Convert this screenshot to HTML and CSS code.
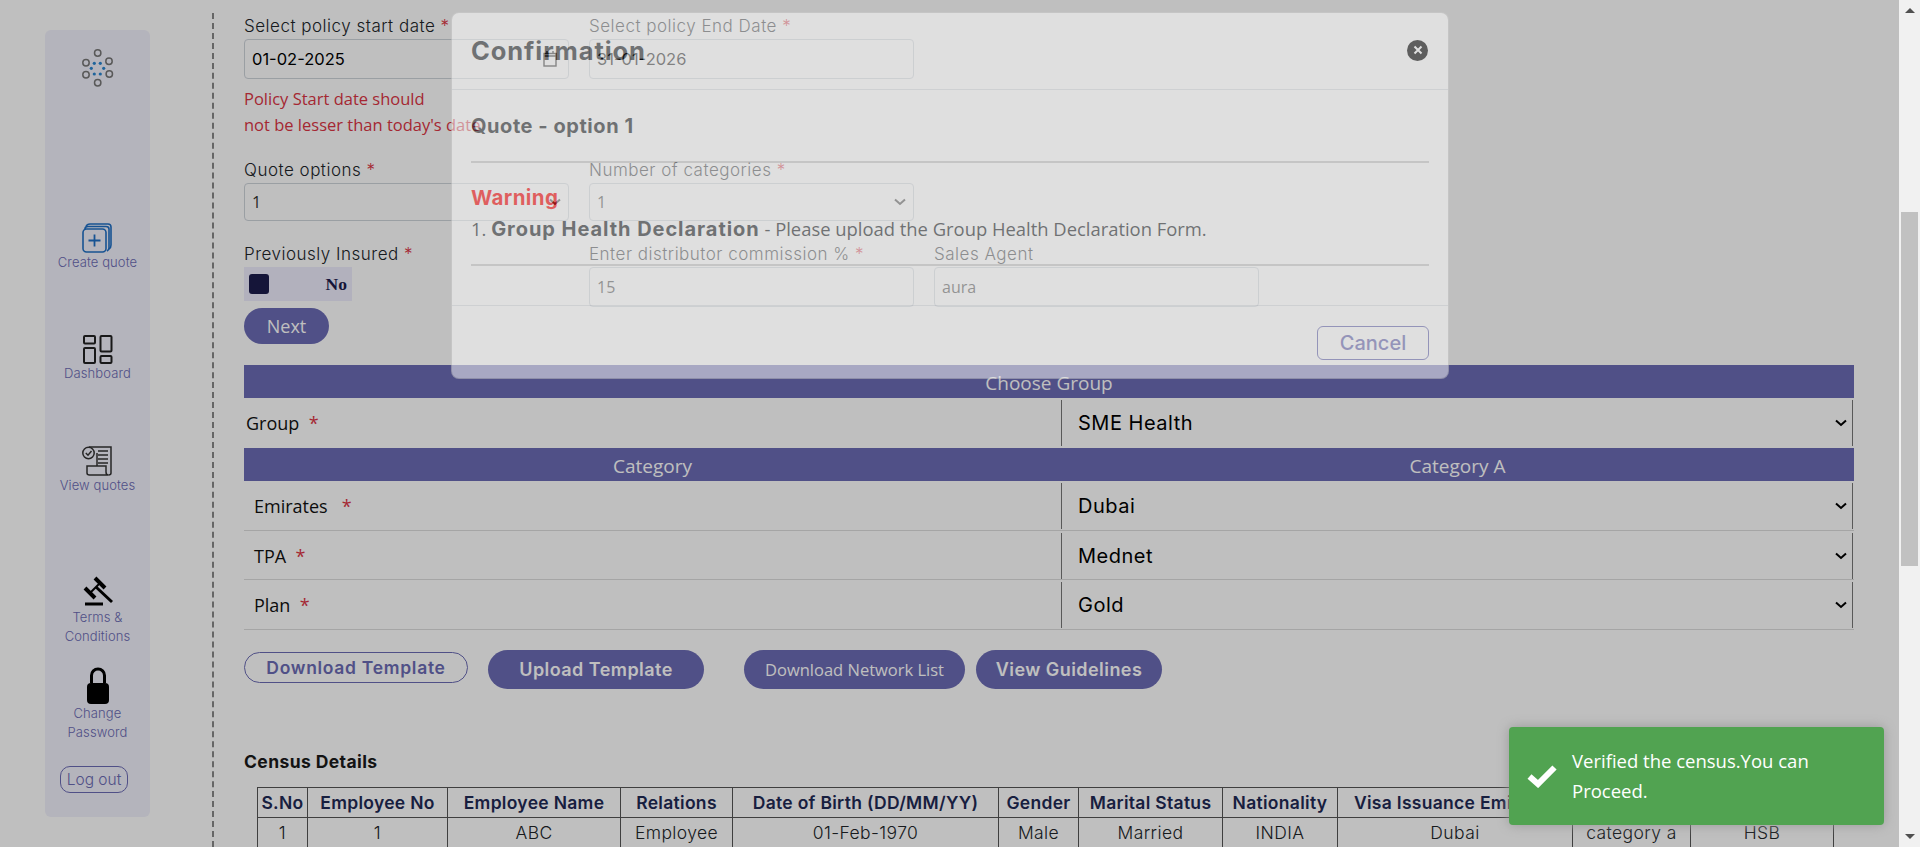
FILE: index.html
```html
<!DOCTYPE html>
<html lang="en">
<head>
  <meta charset="UTF-8">
  <title>Create Quote</title>
  <link rel="stylesheet" href="styles.css">
</head>
<body>
  <div class="viewport">
    <aside class="sidebar">
      <svg class="logo" width="32" height="38" viewBox="0 0 32 38">
        <g fill="none" stroke="#777" stroke-width="1.5">
          <circle cx="15.7" cy="4" r="3.2"/><circle cx="4" cy="13.7" r="3.2"/><circle cx="27" cy="12.3" r="3.2"/>
          <circle cx="4" cy="25.7" r="3.2"/><circle cx="27.3" cy="25" r="3.2"/><circle cx="15.7" cy="33.7" r="3.2"/>
        </g>
        <g fill="#2a86d0">
          <circle cx="12.3" cy="14.3" r="1.6"/><circle cx="18.3" cy="14.3" r="1.6"/><circle cx="9.3" cy="19.3" r="1.6"/>
          <circle cx="21.7" cy="19.3" r="1.6"/><circle cx="12.3" cy="25" r="1.6"/><circle cx="18.3" cy="25" r="1.6"/>
        </g>
      </svg>

      <a class="nav-item nav-create">
        <svg width="30" height="30" viewBox="0 0 30 30" fill="none" stroke="#1f6fc4" stroke-width="1.6">
          <path d="M4 3.5 Q5 1 8 1 H26 Q29 1 29 4 V22 Q29 25 27 26"/>
          <path d="M3 6 Q3 3.5 6 3.5 H24 Q27 3.5 27 6 V25 Q27 27 25 28"/>
          <rect x="1" y="6" width="23" height="23" rx="3.5"/>
          <path d="M12.5 11.5 V23.5 M6.5 17.5 H18.5" stroke-width="1.8"/>
        </svg>
        <span>Create quote</span>
      </a>

      <a class="nav-item nav-dash">
        <svg width="30" height="29" viewBox="0 0 30 29" fill="none" stroke="#222" stroke-width="2">
          <rect x="1" y="1" width="11" height="7.5" rx="1"/>
          <rect x="17.5" y="1" width="11" height="15.5" rx="1"/>
          <rect x="1" y="13" width="11" height="15" rx="1"/>
          <rect x="17.5" y="21" width="11" height="7" rx="1"/>
        </svg>
        <span>Dashboard</span>
      </a>

      <a class="nav-item nav-view">
        <svg width="30" height="30" viewBox="0 0 30 30" fill="none" stroke="#333" stroke-width="1.5">
          <path d="M7 1 H29 V27 Q29 29 26.5 29"/>
          <path d="M5 20 V27 Q5 29 7.5 29 H26.5 Q24 29 24 26 V20 H5 Z"/>
          <path d="M15 20 V7"/>
          <circle cx="6.5" cy="7" r="5.7" fill="#f1f0fb"/>
          <path d="M3.8 7 L6 9.2 L9.5 5"/>
          <path d="M16 5 H26 M16 9 H26 M16 13 H26 M16 17 H26" stroke-width="1.3"/>
        </svg>
        <span>View quotes</span>
      </a>

      <a class="nav-item nav-terms">
        <svg width="32" height="32" viewBox="0 0 32 32" fill="none" stroke="#000">
          <path d="M4 14 L14 24 M14 4 L24 14" stroke-width="4"/>
          <path d="M10 18 L18 10" stroke-width="2"/>
          <path d="M15 13 L31 28" stroke-width="3"/>
          <path d="M4 30 H22" stroke-width="3"/>
        </svg>
        <span>Terms &amp;<br>Conditions</span>
      </a>

      <a class="nav-item nav-lock">
        <svg width="24" height="37" viewBox="0 0 24 37">
          <path d="M5.500 16 V8.500 a6.500 6.500 0 0 1 13 0 V16" fill="none" stroke="#000" stroke-width="3"/>
          <rect x="1" y="16" width="22" height="21" rx="4" fill="#000"/>
        </svg>
        <span>Change<br>Password</span>
      </a>

      <button class="logout">Log out</button>
    </aside>

    <main class="content">
      <div class="form-grid">
        <div class="field">
          <label>Select policy start date <i>*</i></label>
          <div class="date-box">
            <input type="text" value="01-02-2025">
            <svg width="14" height="16" viewBox="0 0 14 16" fill="none" stroke="#111" stroke-width="1.4">
              <rect x="1" y="2.500" width="12" height="12.500"/>
              <path d="M4 0 V3 M10 0 V3 M1 5 H13"/>
            </svg>
          </div>
          <p class="error">Policy Start date should<br>not be lesser than today's date</p>
        </div>
        <div class="field">
          <label>Select policy End Date <i>*</i></label>
          <div class="date-box"><input type="text" value="31-01-2026"></div>
        </div>
        <div></div>

        <div class="field">
          <label>Quote options <i>*</i></label>
          <select class="form-select"><option>1</option></select>
        </div>
        <div class="field">
          <label>Number of categories <i>*</i></label>
          <select class="form-select"><option>1</option></select>
        </div>
        <div></div>

        <div class="field">
          <label>Previously Insured <i>*</i></label>
          <div class="toggle"><span class="knob"></span><b>No</b></div>
          <button class="btn next">Next</button>
        </div>
        <div class="field">
          <label>Enter distributor commission % <i>*</i></label>
          <input class="form-input" type="text" value="15">
        </div>
        <div class="field">
          <label>Sales Agent</label>
          <input class="form-input" type="text" value="aura">
        </div>
      </div>

      <section class="plan-table">
        <div class="bar bar-full">Choose Group</div>
        <div class="plan-row row-group">
          <div class="plan-label group-label">Group &nbsp;<i>*</i></div>
          <select class="plan-select"><option>SME Health</option></select>
        </div>
        <div class="bar bar-split"><span>Category</span><span>Category A</span></div>
        <div class="plan-row">
          <div class="plan-label">Emirates &nbsp;&nbsp;<i>*</i></div>
          <select class="plan-select"><option>Dubai</option></select>
        </div>
        <div class="plan-row">
          <div class="plan-label">TPA &nbsp;<i>*</i></div>
          <select class="plan-select"><option>Mednet</option></select>
        </div>
        <div class="plan-row">
          <div class="plan-label">Plan &nbsp;<i>*</i></div>
          <select class="plan-select"><option>Gold</option></select>
        </div>
      </section>

      <div class="actions">
        <button class="btn-outline">Download Template</button>
        <button class="btn upload">Upload Template</button>
        <button class="btn network">Download Network List</button>
        <button class="btn guidelines">View Guidelines</button>
      </div>

      <h3 class="census-title">Census Details</h3>
      <table class="census">
        <thead>
          <tr>
            <th class="c-sno">S.No</th>
            <th class="c-no">Employee No</th>
            <th class="c-name">Employee Name</th>
            <th class="c-rel">Relations</th>
            <th class="c-dob">Date of Birth (DD/MM/YY)</th>
            <th class="c-gen">Gender</th>
            <th class="c-mar">Marital Status</th>
            <th class="c-nat">Nationality</th>
            <th class="c-visa">Visa Issuance Emirates</th>
            <th class="c-cat">Category</th>
            <th class="c-plan">Plan</th>
          </tr>
        </thead>
        <tbody>
          <tr>
            <td>1</td><td>1</td><td>ABC</td><td>Employee</td><td>01-Feb-1970</td><td>Male</td>
            <td>Married</td><td>INDIA</td><td>Dubai</td><td>category a</td><td>HSB</td>
          </tr>
        </tbody>
      </table>
    </main>

    <div class="backdrop"></div>

    <div class="modal">
      <div class="modal-head">
        <h2>Confirmation</h2>
        <span class="close">
          <svg width="10" height="10" viewBox="0 0 10 10" stroke="#fff" stroke-width="2"><path d="M1.500 1.500 L8.500 8.500 M8.500 1.500 L1.500 8.500"/></svg>
        </span>
      </div>
      <div class="modal-body">
        <h4 class="quote-title">Quote - option 1</h4>
        <hr>
        <h4 class="warning">Warning</h4>
        <p class="declaration">1. <b>Group Health Declaration</b> - Please upload the Group Health Declaration Form.</p>
        <hr>
      </div>
      <div class="modal-foot">
        <button class="cancel">Cancel</button>
      </div>
    </div>

    <div class="toast">
      <svg width="30" height="23" viewBox="0 0 30 23" fill="none" stroke="#fff" stroke-width="6"><path d="M2.500 11.500 L11 19 L27.500 2.500"/></svg>
      <p>Verified the census.You can Proceed.</p>
    </div>
  </div>

  <div class="scrollbar">
    <span class="arrow arrow-up"></span>
    <div class="track"><div class="thumb"></div></div>
    <span class="arrow arrow-down"></span>
  </div>
</body>
</html>
```

FILE: styles.css
```css
/* Page frame */
* {
  box-sizing: border-box;
}
body {
  margin: 0;
  height: 847px;
  display: flex;
  overflow: hidden;
  background-color: #fff;
  font-family: Inter, sans-serif;
  color: #212529;
}
.viewport {
  position: relative;
  flex: 1;
  display: flex;
  overflow: hidden;
}

/* Sidebar */
.sidebar {
  width: 105px;
  height: 787px;
  margin: 30px 0 0 45px;
  flex-shrink: 0;
  display: flex;
  flex-direction: column;
  align-items: center;
  background-color: #f1f0fb;
  border-radius: 6px;
}
.logo {
  margin-top: 19px;
}
.nav-item {
  display: flex;
  flex-direction: column;
  align-items: center;
  text-align: center;
  font-size: 13px;
  line-height: 19px;
  font-weight: 300;
  color: #6b6bb4;
  letter-spacing: 0.1px;
}
.nav-create { margin-top: 136px; }
.nav-dash { margin-top: 63px; }
.nav-view { margin-top: 63px; }
.nav-terms { margin-top: 79px; }
.nav-terms svg { margin-bottom: 2px; }
.nav-lock { margin-top: 21px; }
.logout {
  margin: 24px 7px 0 0;
  width: 68px;
  height: 27px;
  padding: 0;
  background: none;
  border: 1px solid #6b6bb4;
  border-radius: 10px;
  font-family: Inter, sans-serif;
  font-size: 15.500px;
  font-weight: 300;
  color: #6b6bb4;
}

/* Main column */
.content {
  flex: 1;
  margin: 13px 0 0 62px;
  padding: 1px 45px 0 30px;
  border-left: 2px dashed #888;
  min-width: 0;
}
.form-grid {
  display: grid;
  grid-template-columns: 325px 325px 325px;
  column-gap: 20px;
  row-gap: 20px;
}
label {
  display: block;
  height: 25px;
  font-size: 17px;
  line-height: 24px;
  font-weight: 300;
  letter-spacing: 0.5px;
  white-space: nowrap;
}
i {
  font-style: normal;
  color: #dc3545;
}
.date-box {
  display: flex;
  align-items: center;
  height: 40px;
  padding-right: 11px;
  border: 1px solid #ced4da;
  border-radius: 4px;
  background-color: #fff;
}
.date-box input {
  flex: 1;
  min-width: 0;
  border: none;
  outline: none;
  background: none;
  padding: 0 7px;
  font-family: Inter, sans-serif;
  font-size: 16.500px;
  color: #000;
}
.form-select, .form-input {
  display: block;
  width: 325px;
  height: 38px;
  padding: 0 7px;
  border: 1px solid #ced4da;
  border-radius: 4px;
  background-color: #fff;
  font-family: "Open Sans", sans-serif;
  font-size: 16px;
  color: #333;
}
.form-select {
  margin-bottom: 1px;
  appearance: none;
  background: #fff url("data:image/svg+xml,%3Csvg xmlns='http://www.w3.org/2000/svg' width='12' height='8' viewBox='0 0 12 8'%3E%3Cpath d='M1 1.500 L6 6 L11 1.500' fill='none' stroke='%23333' stroke-width='2'/%3E%3C/svg%3E") no-repeat right 7px center;
}
.form-input {
  height: 40px;
}
.error {
  margin: 7px 0 0;
  font-family: "Open Sans", sans-serif;
  font-size: 16.500px;
  line-height: 26px;
  color: #dc3545;
  white-space: nowrap;
}
.toggle {
  width: 108px;
  height: 34px;
  padding: 0 5px;
  display: flex;
  align-items: center;
  justify-content: space-between;
  background-color: #eeecfc;
  font-family: "Liberation Serif", serif;
  font-size: 17.500px;
}
.toggle b {
  color: #1c1c4d;
}
.knob {
  width: 20px;
  height: 20px;
  background-color: #1c1c4d;
  border-radius: 3px;
}
.btn {
  border: none;
  background-color: #6b6bb4;
  color: #fff;
  font-family: "Open Sans", sans-serif;
  padding: 0;
}
.next {
  display: block;
  width: 85px;
  height: 36px;
  margin-top: 7px;
  border-radius: 18px;
  font-size: 18px;
}

/* Group / category table */
.plan-table {
  margin: 21px 0 0;
  width: 1610px;
}
.bar {
  height: 33px;
  background-color: #6b6bb4;
  color: #fff;
  font-family: "Open Sans", sans-serif;
  font-size: 19px;
  line-height: 36px;
  text-align: center;
}
.bar-split {
  display: grid;
  grid-template-columns: 817px 793px;
}
.plan-row {
  display: grid;
  grid-template-columns: 817px 792px;
  height: 49.500px;
  padding: 2px 0;
  border-bottom: 1px solid #ddd;
}
.row-group {
  height: 50px;
  border-bottom: none;
}
.plan-label {
  padding-left: 10px;
  font-family: "Open Sans", sans-serif;
  font-size: 18px;
  line-height: 46px;
  color: #111;
}
.group-label {
  padding-left: 2px;
}
.plan-select {
  height: 100%;
  padding-left: 16px;
  border: none;
  border-left: 1px solid #777;
  border-right: 1px solid #777;
  appearance: none;
  background: #fff url("data:image/svg+xml,%3Csvg xmlns='http://www.w3.org/2000/svg' width='12' height='8' viewBox='0 0 12 8'%3E%3Cpath d='M1 1.500 L6 6 L11 1.500' fill='none' stroke='%23000' stroke-width='2'/%3E%3C/svg%3E") no-repeat right 5px center;
  font-family: Inter, sans-serif;
  font-size: 20px;
  letter-spacing: 0.5px;
  color: #000;
}

/* Buttons under the table */
.actions {
  display: flex;
  align-items: flex-start;
  margin-top: 20px;
}
.btn-outline {
  width: 224px;
  height: 31px;
  margin-top: 2px;
  padding: 0;
  background: none;
  border: 1px solid #6b6bb4;
  border-radius: 16px;
  font-family: Inter, sans-serif;
  font-size: 17.500px;
  font-weight: 600;
  letter-spacing: 0.7px;
  color: #6b6bb4;
}
.upload, .network, .guidelines {
  height: 39px;
  border-radius: 20px;
  font-family: Inter, sans-serif;
  font-size: 18px;
  font-weight: 600;
  letter-spacing: 0.45px;
}
.upload {
  width: 216px;
  margin-left: 20px;
}
.network {
  width: 221px;
  margin-left: 40px;
  font-family: "Open Sans", sans-serif;
  font-size: 16.500px;
  font-weight: 400;
  letter-spacing: 0;
}
.guidelines {
  width: 186px;
  margin-left: 11px;
}

/* Census table */
.census-title {
  margin: 62px 0 0;
  font-size: 17.500px;
  line-height: 22px;
  font-weight: 700;
  letter-spacing: 0.4px;
  color: #1a1a1a;
}
.census {
  margin: 14px 0 0 13px;
  width: 1576px;
  table-layout: fixed;
  border-collapse: collapse;
  font-size: 17.500px;
}
.census th, .census td {
  height: 30px;
  padding: 0;
  border: 1px solid #555;
  text-align: center;
  white-space: nowrap;
  overflow: hidden;
}
.census th {
  font-weight: 600;
  letter-spacing: 0.3px;
  color: #1f2a55;
}
.census td {
  font-weight: 300;
  letter-spacing: 0.4px;
}
.c-sno { width: 50px; }
.c-no { width: 140px; }
.c-name { width: 173px; }
.c-rel { width: 112px; }
.c-dob { width: 266px; }
.c-gen { width: 80px; }
.c-mar { width: 144px; }
.c-nat { width: 115px; }
.c-visa { width: 235px; }
.c-cat { width: 118px; }
.c-plan { width: 143px; }

/* Dimming + modal (fading in, so half opaque) */
.backdrop {
  position: absolute;
  inset: 0;
  background-color: rgba(0, 0, 0, 0.25);
}
.modal {
  position: absolute;
  top: 12px;
  left: 451px;
  width: 998px;
  height: 367px;
  background-color: #fff;
  border: 1px solid rgba(0, 0, 0, 0.2);
  border-radius: 8px;
  opacity: 0.5;
}
.modal-head {
  height: 77px;
  padding: 0 19px 2px;
  display: flex;
  align-items: center;
  justify-content: space-between;
  border-bottom: 1px solid #dee2e6;
}
.modal-head h2 {
  margin: 0;
  font-size: 25.500px;
  font-weight: 700;
  letter-spacing: 0.9px;
}
.close {
  width: 21px;
  height: 21px;
  margin-right: 1px;
  display: flex;
  align-items: center;
  justify-content: center;
  background-color: #000;
  border-radius: 50%;
}
.modal-body {
  height: 215px;
  padding: 23px 19px 0;
}
.modal-body hr {
  margin: 0;
  border: none;
  border-top: 2px solid #ccc;
}
.quote-title {
  margin: 0 0 21px;
  font-size: 20px;
  line-height: 27px;
  font-weight: 700;
  letter-spacing: 0.55px;
}
.warning {
  margin: 21px 0 0;
  font-size: 20.500px;
  line-height: 27px;
  font-weight: 700;
  letter-spacing: 0.4px;
  color: #f00;
}
.declaration {
  margin: 4px 0 21px;
  font-family: "Open Sans", sans-serif;
  font-size: 18.400px;
  line-height: 27px;
  white-space: nowrap;
}
.declaration b {
  font-family: Inter, sans-serif;
  font-size: 20px;
  letter-spacing: 0.95px;
}
.modal-foot {
  height: 73px;
  padding: 20px 19px 0;
  display: flex;
  justify-content: flex-end;
  align-items: flex-start;
  border-top: 1px solid #dee2e6;
}
.cancel {
  width: 112px;
  height: 34px;
  padding: 0;
  background: none;
  border: 1px solid #6b6bb4;
  border-radius: 6px;
  font-family: Inter, sans-serif;
  font-size: 20px;
  font-weight: 500;
  color: #6b6bb4;
}

/* Toast */
.toast {
  position: absolute;
  left: 1509px;
  top: 727px;
  width: 375px;
  height: 98px;
  padding: 0 20px 0 18px;
  display: flex;
  align-items: center;
  gap: 15px;
  background-color: #51a351;
  border-radius: 4px;
  box-shadow: 0 0 12px #999;
  color: #fff;
  font-family: "Open Sans", sans-serif;
  font-size: 18.500px;
  line-height: 30px;
}
.toast svg {
  flex-shrink: 0;
}
.toast p {
  margin: 0;
}

/* Browser scrollbar */
.scrollbar {
  width: 21px;
  flex-shrink: 0;
  display: flex;
  flex-direction: column;
  align-items: center;
  background-color: #f1f1f1;
}
.track {
  flex: 1;
  width: 17px;
  padding-top: 191px;
}
.thumb {
  height: 354px;
  background-color: #c1c1c1;
}
.arrow {
  width: 0;
  height: 0;
  margin: 8px 0;
  border-left: 5px solid transparent;
  border-right: 5px solid transparent;
}
.arrow-up {
  border-bottom: 5px solid #505050;
}
.arrow-down {
  border-top: 5px solid #505050;
}
```
